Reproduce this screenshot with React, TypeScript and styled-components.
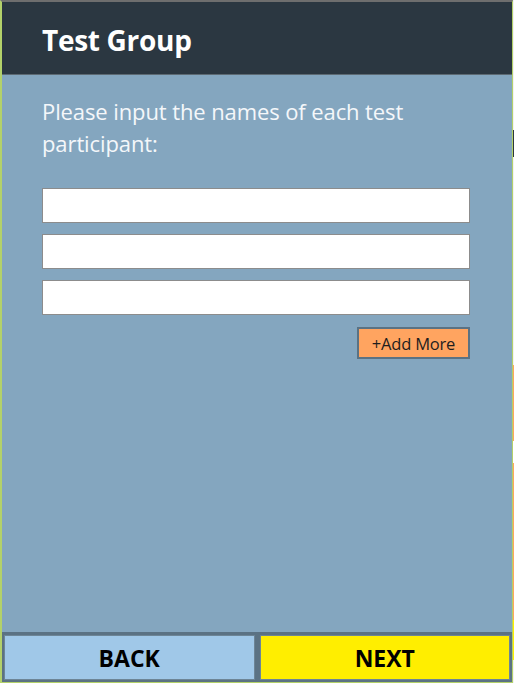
import React from 'react';
import styled, { createGlobalStyle } from 'styled-components';

const GlobalStyle = createGlobalStyle`
  html, body { margin: 0; padding: 0; background: #f2f2f2; }
  body { font-family: "Open Sans", "Noto Sans", "Liberation Sans", sans-serif; }
`;

const Page = styled.div`
  display: flex;
  width: 514px;
  height: 683px;
  overflow: hidden;
`;

const Window = styled.div`
  width: 510px;
  height: 680px;
  display: flex;
  flex-direction: column;
  border-left: 2px solid #b3d16a;
  border-right: 1px solid #b3d16a;
  border-top: 2px solid #6e6e6e;
  border-bottom: 1px solid #b3d16a;
  background: #84a6bf;
`;

const Header = styled.header`
  height: 73px;
  background: #2b3741;
  border-bottom: 1px solid #5d6a73;
  display: flex;
  align-items: center;
  padding: 3px 0 0 40px;
  box-sizing: border-box;
  color: #fff;
  font-size: 28px;
  font-weight: 700;
  letter-spacing: -0.3px;
`;

const Body = styled.main`
  flex: 1;
  padding: 20px 40px 0 40px;
  display: flex;
  flex-direction: column;
`;

const Prompt = styled.p`
  margin: 0 0 29px 0;
  color: #f4f7fa;
  font-size: 22px;
  line-height: 32px;
  letter-spacing: -0.1px;
`;

const Fields = styled.div`
  display: flex;
  flex-direction: column;
  gap: 11px;
`;

const NameInput = styled.input`
  box-sizing: border-box;
  width: 428px;
  height: 35px;
  margin: 0;
  border: 1px solid #8c8c8c;
  background: #fff;
  outline: none;
`;

const AddRow = styled.div`
  display: flex;
  justify-content: flex-end;
  width: 428px;
  margin-top: 12px;
`;

const AddButton = styled.button`
  box-sizing: border-box;
  width: 113px;
  height: 32px;
  background: #ffa460;
  border: 2px solid #5b7283;
  color: #1e1e1e;
  font-family: inherit;
  font-size: 16.5px;
  letter-spacing: -0.2px;
  padding: 1px 0 0 0;
`;

const Footer = styled.footer`
  height: 50px;
  box-sizing: border-box;
  background: #5b7283;
  padding: 3px 2px 2px 2px;
  display: grid;
  grid-template-columns: 1fr 1fr;
  gap: 5px;
`;

const NavButton = styled.button<{ $tone: string }>`
  border: 1px solid #6d8596;
  background: ${p => p.$tone};
  color: #000;
  font-family: inherit;
  font-size: 23px;
  font-weight: 700;
  padding: 0;
`;

const Behind = styled.div`
  flex: 1;
  display: flex;
  flex-direction: column;
  background: #f2f2f2;
`;

const Strip = styled.div<{ $h: number; $c: string }>`
  height: ${p => p.$h}px;
  background: ${p => p.$c};
`;

const strip = [
  { h: 130, c: '#f2f2f2' },
  { h: 27, c: '#2b3741' },
  { h: 208, c: '#f2f2f2' },
  { h: 76, c: '#ffa460' },
  { h: 22, c: '#ffffff' },
  { h: 157, c: '#ffa460' },
  { h: 40, c: '#ffee00' },
  { h: 23, c: '#f2f2f2' },
];

export default function App() {
  return (
    <>
      <GlobalStyle />
      <Page>
        <Window>
          <Header>Test Group</Header>
          <Body>
            <Prompt>
              Please input the names of each test
              <br />
              participant:
            </Prompt>
            <Fields>
              <NameInput />
              <NameInput />
              <NameInput />
            </Fields>
            <AddRow>
              <AddButton>+Add More</AddButton>
            </AddRow>
          </Body>
          <Footer>
            <NavButton $tone="#a0c8e8">BACK</NavButton>
            <NavButton $tone="#ffee00">NEXT</NavButton>
          </Footer>
        </Window>
        <Behind>
          {strip.map((s, i) => (
            <Strip key={i} $h={s.h} $c={s.c} />
          ))}
        </Behind>
      </Page>
    </>
  );
}
